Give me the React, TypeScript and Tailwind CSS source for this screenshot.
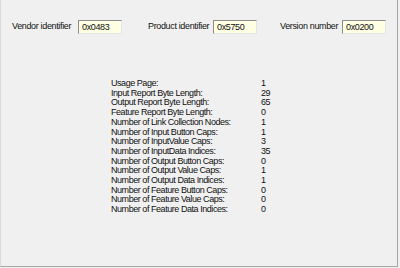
import React from "react";

const font = "font-['Liberation_Sans',Arial,sans-serif]";

const rows: [string, string][] = [
  ["Usage Page:", "1"],
  ["Input Report Byte Length:", "29"],
  ["Output Report Byte Length:", "65"],
  ["Feature Report Byte Length:", "0"],
  ["Number of Link Collection Nodes:", "1"],
  ["Number of Input Button Caps:", "1"],
  ["Number of InputValue Caps:", "3"],
  ["Number of InputData Indices:", "35"],
  ["Number of Output Button Caps:", "0"],
  ["Number of Output Value Caps:", "1"],
  ["Number of Output Data Indices:", "1"],
  ["Number of Feature Button Caps:", "0"],
  ["Number of Feature Value Caps:", "0"],
  ["Number of Feature Data Indices:", "0"],
];

const IdBox = ({ value }: { value: string }) => (
  <div className="w-[44px] h-[14px] shrink-0 bg-[#ffffe4] border border-t-[#8c8c8c] border-l-[#8c8c8c] border-b-[#e4e4e4] border-r-[#e4e4e4] pl-[3px] text-[9px] leading-[12px] tracking-[-0.35px] text-[#111] whitespace-nowrap">
    {value}
  </div>
);

export default function App() {
  return (
    <div className={`w-[400px] h-[268px] bg-[#f0f0f0] ${font}`}>
      <div className="w-[398px] h-[267px] border-l border-l-[#dadada] border-r border-r-[#a8a8a8] border-b border-b-[#a8a8a8]">
        {/* Identifiers */}
        <div className="flex items-center pt-[20px] pl-[11px] text-[9px] tracking-[-0.35px] text-[#111] whitespace-nowrap">
          <span className="w-[59px] shrink-0">Vendor identifier</span>
          <div className="ml-[7px]">
            <IdBox value="0x0483" />
          </div>
          <span className="ml-[26px] w-[59px] shrink-0">Product identifier</span>
          <div className="ml-[6px]">
            <IdBox value="0x5750" />
          </div>
          <span className="ml-[23px] w-[55px] shrink-0">Version number</span>
          <div className="ml-[7px]">
            <IdBox value="0x0200" />
          </div>
        </div>

        {/* Device capabilities */}
        <div className="mt-[45px] pl-[110px] text-[9px] leading-[9.7px] tracking-[-0.45px] text-[#111] whitespace-nowrap">
          {rows.map(([label, value]) => (
            <div key={label} className="flex">
              <span className="w-[150px] shrink-0">{label}</span>
              <span>{value}</span>
            </div>
          ))}
        </div>
      </div>
    </div>
  );
}
